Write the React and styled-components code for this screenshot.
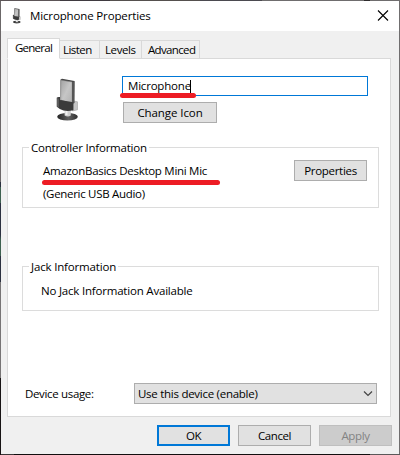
import React from 'react';
import styled, { createGlobalStyle } from 'styled-components';

const Global = createGlobalStyle`
  * { box-sizing: border-box; }
  body { margin: 0; }
`;

const Desktop = styled.div`
  width: 400px;
  height: 455px;
  padding: 1px;
  overflow: hidden;
  background:
    linear-gradient(90deg, #5c5557 0 60px, #3f3a40 60px 110px, #55504e 110px 200px, #4b4a50 200px 262px, #6f6d6e 262px 364px, #2e2b2c 364px 370px, #6f6d6e 370px) 0 0 / 400px 1px no-repeat,
    linear-gradient(#6b6768 0 182px, #2a303e 182px 187px, #3e6150 187px 203px, #2b3040 203px 235px, #3e6150 240px 256px, #2b3040 256px 282px, #777475 282px 378px, #171314 378px) 0 0 / 1px 455px no-repeat,
    linear-gradient(90deg, #3a3637 0 14px, #120e0f 14px 370px, #5b5859 370px) 0 454px / 400px 1px no-repeat,
    #706e6f;
`;

const Dialog = styled.main`
  display: flex;
  flex-direction: column;
  width: 398px;
  height: 453px;
  background: #f0f0f0;
  color: #000;
  font: 11.5px/16px "Open Sans", "Noto Sans", sans-serif;
`;

const Text = styled.span`
  letter-spacing: ${(p) => p.$spacing || 0}px;
  white-space: pre;
`;

const TitleBar = styled.header`
  display: flex;
  align-items: flex-start;
  height: 30px;
  padding: 7px 10px 0 11px;
  background: #fff;
`;

const Title = styled(Text)`
  flex: 1;
  margin-left: 8px;
`;

const CloseButton = styled.button`
  display: flex;
  margin-top: 1px;
  padding: 0;
  border: 0;
  background: none;
`;

const TabStrip = styled.nav`
  display: flex;
  align-items: flex-end;
  height: 28px;
  margin: 0 0 -1px 6px;
`;

const Tab = styled.button`
  position: relative;
  display: flex;
  width: ${(p) => p.$width}px;
  height: ${(p) => (p.$active ? 21 : 19)}px;
  padding: 1px 0 0 ${(p) => p.$inset}px;
  border: 1px solid #d9d9d9;
  border-left-width: ${(p) => (p.$active ? 1 : 0)}px;
  border-bottom-color: ${(p) => (p.$active ? '#fff' : '#d9d9d9')};
  background: ${(p) => (p.$active ? '#fff' : '#f0f0f0')};
  z-index: 1;
  color: inherit;
  font: inherit;
`;

const Panel = styled.section`
  display: flex;
  flex-direction: column;
  width: 384px;
  height: 359px;
  margin-left: 6px;
  padding: 17px 11px 0 14px;
  border: 1px solid #d9d9d9;
  background: #fff;
`;

const DeviceRow = styled.div`
  display: flex;
  height: 71px;
`;

const DeviceIcon = styled.div`
  width: 100px;
  padding: 2px 0 0 34px;
`;

const DeviceFields = styled.div`
  display: flex;
  flex-direction: column;
  align-items: flex-start;
  gap: 6px;
`;

const NameField = styled.div`
  position: relative;
  display: flex;
  width: 246px;
  height: 20px;
  padding: 1px 0 0 5px;
  border: 1px solid #0078d7;
`;

const Caret = styled.i`
  width: 1px;
  height: 13px;
  margin: 2px 0 0 -1px;
  background: #000;
`;

const Marker = styled.i`
  position: absolute;
  left: ${(p) => p.$left}px;
  top: ${(p) => p.$top}px;
  width: ${(p) => p.$width}px;
  height: 5px;
  border-radius: 2.5px;
  background: #ed1c24;
`;

const Button = styled.button`
  display: flex;
  justify-content: center;
  width: ${(p) => p.$width || 73}px;
  height: 21px;
  margin-left: ${(p) => p.$indent || 0}px;
  padding: ${(p) => (p.$primary ? 1 : 2)}px 0 0;
  border: ${(p) => (p.$primary ? '2px solid #0078d7' : '1px solid #adadad')};
  background: #e1e1e1;
  color: #000;
  font: inherit;

  &:disabled {
    border-color: #bfbfbf;
    background: #ccc;
    color: #838383;
  }
`;

const Group = styled.section`
  display: flex;
  flex-direction: column;
  width: 357px;
  height: ${(p) => p.$height}px;
  margin-bottom: ${(p) => p.$gap}px;
  border: 1px solid #dcdcdc;
`;

const GroupTitle = styled.div`
  display: flex;
  width: max-content;
  height: 16px;
  margin: -8px 0 0 6px;
  padding: 0 2px;
  background: #fff;
`;

const GroupRow = styled.div`
  display: flex;
  justify-content: space-between;
  align-items: flex-start;
  padding: ${(p) => p.$pad};
`;

const Lines = styled.div`
  position: relative;
  display: flex;
  flex-direction: column;
  gap: 7px;
  padding-top: 3px;
`;

const UsageRow = styled.div`
  display: flex;
  align-items: flex-start;
  justify-content: space-between;
  padding: 0 2px 0 3px;
`;

const UsageLabel = styled(Text)`
  margin-top: 3px;
`;

const Select = styled.div`
  display: flex;
  justify-content: space-between;
  width: 243px;
  height: 21px;
  padding: 2px 3px 0 3px;
  border: 1px solid #adadad;
  background: #e1e1e1;
`;

const Chevron = styled.svg`
  margin-top: 4px;
`;

const Footer = styled.footer`
  display: flex;
  justify-content: flex-end;
  gap: 8px;
  padding: 8px 7px 0 0;
`;

function MicrophoneIcon({ width, height }) {
  return (
    <svg width={width} height={height} viewBox="0 0 24 44">
      <defs>
        <linearGradient id="metal" x1="0" y1="0" x2="1" y2="1">
          <stop offset="0" stopColor="#a2a2a2" />
          <stop offset=".5" stopColor="#c6c6c6" />
          <stop offset="1" stopColor="#b0b0b0" />
        </linearGradient>
        <linearGradient id="base" x1="0" y1="0" x2="1" y2="0">
          <stop offset="0" stopColor="#242424" />
          <stop offset=".55" stopColor="#606060" />
          <stop offset="1" stopColor="#303030" />
        </linearGradient>
      </defs>
      <ellipse cx="11.5" cy="38.8" rx="10.3" ry="3.8" fill="url(#base)" />
      <path d="M8.6 31h6.2v6.5q-3 1.8-6.2 0z" fill="#cfcfcf" />
      <path d="M9.5 32h2v5h-2z" fill="#f2f2f2" />
      <path d="M17.5 23l4 .8v8L16.5 33z" fill="#c6c6c6" stroke="#a2a2a2" strokeWidth=".6" />
      <path d="M4.5 1.6L6 .8l12.5 2.2-.4 22-13.6-2z" fill="#444" />
      <path d="M5 2.2L16 4v21.5L4.8 22z" fill="url(#metal)" stroke="#909090" strokeWidth=".5" />
      <path d="M16.3 4l2.2-.7V25l-2.2 1z" fill="#555" />
      <path d="M.8 19.5q1.8-1 3.2-.4v2.9l13.4 2.2v8q-8 2-13.6-1.2L.8 28.8z" fill="#3b3b3b" />
      <path d="M.9 20v8.2l2 1.5v-9z" fill="#5e5e5e" />
    </svg>
  );
}

const tabs = [
  { label: 'General', width: 53, inset: 7, spacing: -0.75, active: true },
  { label: 'Listen', width: 40, inset: 3, spacing: -0.55 },
  { label: 'Levels', width: 42, inset: 5, spacing: -0.4 },
  { label: 'Advanced', width: 58, inset: 6, spacing: -0.65 },
];

export default function App() {
  return (
    <Desktop>
      <Global />
      <Dialog>
        <TitleBar>
          <MicrophoneIcon width={10} height={16} />
          <Title $spacing={-0.14}>Microphone Properties</Title>
          <CloseButton aria-label="Close">
            <svg width="12" height="12" viewBox="0 0 12 12">
              <path d="M1 1.5l10 10M11 1.5l-10 10" stroke="#000" strokeWidth="1.1" />
            </svg>
          </CloseButton>
        </TitleBar>
        <TabStrip>
          {tabs.map((t) => (
            <Tab key={t.label} $width={t.width} $inset={t.inset} $active={t.active}>
              <Text $spacing={t.spacing}>{t.label}</Text>
            </Tab>
          ))}
        </TabStrip>
        <Panel>
          <DeviceRow>
            <DeviceIcon>
              <MicrophoneIcon width={24} height={44} />
            </DeviceIcon>
            <DeviceFields>
              <NameField>
                <Text $spacing={-0.2}>Microphone</Text>
                <Caret />
                <Marker $left={-3} $top={16} $width={76} />
              </NameField>
              <Button $width={94} $indent={1}>
                <Text $spacing={-0.08}>Change Icon</Text>
              </Button>
            </DeviceFields>
          </DeviceRow>
          <Group $height={61} $gap={58}>
            <GroupTitle>
              <Text $spacing={-0.22}>Controller Information</Text>
            </GroupTitle>
            <GroupRow $pad="4px 11px 0 20px">
              <Lines>
                <Text $spacing={-0.28}>AmazonBasics Desktop Mini Mic</Text>
                <Text $spacing={-0.3}>(Generic USB Audio)</Text>
                <Marker $left={-1} $top={20} $width={178} />
              </Lines>
              <Button>
                <Text $spacing={-0.3}>Properties</Text>
              </Button>
            </GroupRow>
          </Group>
          <Group $height={45} $gap={72}>
            <GroupTitle>
              <Text $spacing={-0.17}>Jack Information</Text>
            </GroupTitle>
            <GroupRow $pad="8px 11px 0 18px">
              <Text $spacing={-0.2}>No Jack Information Available</Text>
            </GroupRow>
          </Group>
          <UsageRow>
            <UsageLabel $spacing={-0.34}>Device usage:</UsageLabel>
            <Select>
              <Text $spacing={-0.27}>Use this device (enable)</Text>
              <Chevron width="10" height="8" viewBox="0 0 10 8">
                <path d="M1 1.5l4 4 4-4" fill="none" stroke="#444" strokeWidth="1.2" />
              </Chevron>
            </Select>
          </UsageRow>
        </Panel>
        <Footer>
          <Button $primary>
            <Text $spacing={-0.6}>OK</Text>
          </Button>
          <Button>
            <Text $spacing={-0.45}>Cancel</Text>
          </Button>
          <Button disabled>
            <Text $spacing={-0.4}>Apply</Text>
          </Button>
        </Footer>
      </Dialog>
    </Desktop>
  );
}
